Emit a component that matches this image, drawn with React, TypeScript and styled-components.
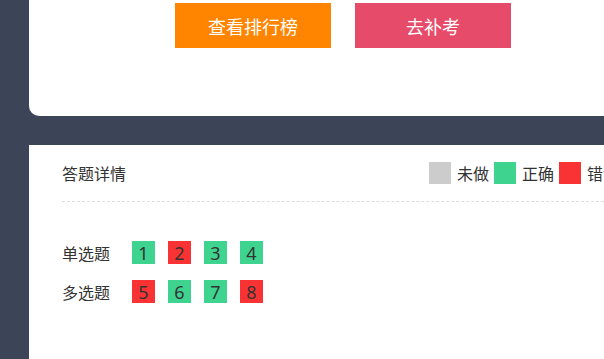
import React from 'react';
import styled, { createGlobalStyle } from 'styled-components';

const GlobalStyle = createGlobalStyle`
    html, body {
        margin: 0;
        padding: 0;
        background: #3c4557;
        overflow: hidden;
        font-family: 'Noto Sans CJK SC', 'Noto Sans', sans-serif;
    }
`;

const Page = styled('div')((): any => ({
    width: '686px',
    display: 'flex',
    flexDirection: 'column',
    padding: '0 0 0 29px',
    boxSizing: 'border-box',
}));

const TopCard = styled('div')((): any => ({
    width: '628px',
    height: '116px',
    background: '#fff',
    borderRadius: '0 0 10px 10px',
    display: 'flex',
    justifyContent: 'center',
    alignItems: 'flex-start',
    gap: '24px',
    paddingTop: '3px',
    boxSizing: 'border-box',
}));

const ActionButton = styled('button')<{ $color: string }>((props): any => ({
    width: '156px',
    height: '45px',
    border: 'none',
    margin: 0,
    padding: 0,
    background: props.$color,
    color: '#fff',
    fontSize: '18px',
    fontFamily: 'inherit',
    cursor: 'pointer',
}));

const DetailCard = styled('div')((): any => ({
    width: '628px',
    height: '214px',
    marginTop: '29px',
    background: '#fff',
    padding: '0 33px',
    boxSizing: 'border-box',
}));

const DetailHeader = styled('div')((): any => ({
    height: '56px',
    display: 'flex',
    alignItems: 'center',
    justifyContent: 'space-between',
    borderBottom: '1px dashed #dddddd',
    color: '#333',
    fontSize: '16px',
}));

const Legend = styled('div')((): any => ({
    display: 'flex',
    alignItems: 'center',
}));

const LegendSwatch = styled('span')<{ $color: string }>((props): any => ({
    width: '22px',
    height: '22px',
    background: props.$color,
    marginRight: '6px',
}));

const LegendText = styled('span')((): any => ({
    marginRight: '5px',
    lineHeight: '22px',
}));

const Questions = styled('div')((): any => ({
    paddingTop: '39px',
    display: 'flex',
    flexDirection: 'column',
    gap: '16px',
}));

const QuestionRow = styled('div')((): any => ({
    display: 'flex',
    alignItems: 'center',
    height: '23px',
}));

const RowLabel = styled('span')((): any => ({
    width: '70px',
    color: '#333',
    fontSize: '16px',
}));

const Boxes = styled('div')((): any => ({
    display: 'flex',
    gap: '13px',
}));

const NumberBox = styled('span')<{ $ok: boolean }>((props): any => ({
    width: '23px',
    height: '23px',
    display: 'flex',
    alignItems: 'center',
    justifyContent: 'center',
    background: props.$ok ? '#3ed490' : '#f93333',
    color: '#333',
    fontSize: '18px',
    fontFamily: "'Noto Sans', sans-serif",
}));

const rows = [
    { label: '单选题', items: [{ n: 1, ok: true }, { n: 2, ok: false }, { n: 3, ok: true }, { n: 4, ok: true }] },
    { label: '多选题', items: [{ n: 5, ok: false }, { n: 6, ok: true }, { n: 7, ok: true }, { n: 8, ok: false }] },
];

function App(): React.ReactElement {
    return (
        <>
            <GlobalStyle />
            <Page>
                <TopCard>
                    <ActionButton $color="#ff8400">查看排行榜</ActionButton>
                    <ActionButton $color="#e64c69">去补考</ActionButton>
                </TopCard>
                <DetailCard>
                    <DetailHeader>
                        <span>答题详情</span>
                        <Legend>
                            <LegendSwatch $color="#cccccc" />
                            <LegendText>未做</LegendText>
                            <LegendSwatch $color="#3ed490" />
                            <LegendText>正确</LegendText>
                            <LegendSwatch $color="#f93333" />
                            <LegendText>错误</LegendText>
                        </Legend>
                    </DetailHeader>
                    <Questions>
                        {rows.map((row) => (
                            <QuestionRow key={row.label}>
                                <RowLabel>{row.label}</RowLabel>
                                <Boxes>
                                    {row.items.map((item) => (
                                        <NumberBox key={item.n} $ok={item.ok}>
                                            {item.n}
                                        </NumberBox>
                                    ))}
                                </Boxes>
                            </QuestionRow>
                        ))}
                    </Questions>
                </DetailCard>
            </Page>
        </>
    );
}

export default App;
